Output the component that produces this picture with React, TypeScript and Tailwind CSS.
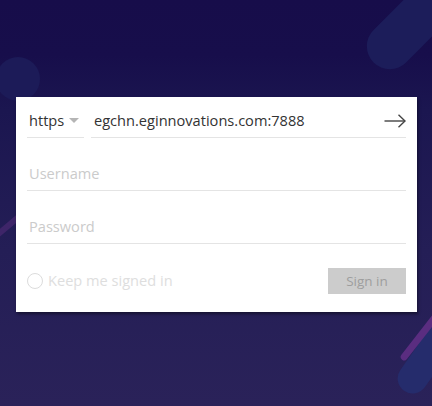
export default function App() {
  const font = { fontFamily: '"Open Sans", "Liberation Sans", sans-serif' }
  return (
    <div className="relative w-[432px] h-[406px] overflow-hidden bg-[linear-gradient(180deg,#170d4a_0px,#170e4b_55px,#1b1650_110px,#241e56_250px,#2a2259_406px)]" style={font}>
      {/* background decorations */}
      <div className="absolute left-[-4px] top-[57px] w-[44px] h-[44px] rounded-full bg-[#1c1b58]" />
      <div className="absolute left-[393px] top-[-40px] w-[46px] h-[120px] rounded-full bg-[#1c1d5a] rotate-45" />
      <div className="absolute left-[6px] top-[200px] w-[6px] h-[50px] rounded-full bg-[#3e2569] rotate-[50deg]" />
      <div className="absolute left-[412px] top-[318px] w-[30px] h-[80px] rounded-full bg-[#252c6c] rotate-[35deg]" />
      <div className="absolute left-[417px] top-[306px] w-[7px] h-[60px] rounded-full bg-[#5a2d80] rotate-[38deg]" />

      {/* card */}
      <div className="absolute left-[16px] top-[97px] w-[401px] bg-white px-[11px] pt-[7px] pb-[18px] shadow-[1px_2px_3px_rgba(0,0,0,0.45)]">
        <div className="flex h-[34px] gap-[7px]">
          <div className="flex w-[57px] items-center border-b border-[#e4e4e4] pl-[2px]">
            <span className="text-[14.6px] text-[#333]">https</span>
            <svg width="10" height="6" viewBox="0 0 10 6" className="ml-[5px]">
              <path d="M0 0 L10 0 L5 5 Z" fill="#b5b5b5" />
            </svg>
          </div>
          <div className="flex flex-1 items-center justify-between border-b border-[#e4e4e4] pl-[3px]">
            <span className="text-[14.6px] text-[#333]">egchn.eginnovations.com:7888</span>
            <svg width="22" height="14" viewBox="0 0 22 14" fill="none" stroke="#444" strokeWidth="1.4">
              <path d="M0.5 7 H21" />
              <path d="M14.5 0.8 L21 7 L14.5 13.2" />
            </svg>
          </div>
        </div>
        <div className="flex h-[53px] items-end border-b border-[#e4e4e4] pb-[7px] pl-[2px]">
          <span className="text-[14.6px] leading-[20px] text-[#cbcbcb]">Username</span>
        </div>
        <div className="flex h-[53px] items-end border-b border-[#e4e4e4] pb-[7px] pl-[2px]">
          <span className="text-[14.6px] leading-[20px] text-[#cbcbcb]">Password</span>
        </div>
        <div className="mt-[24px] flex h-[26px] items-center justify-between">
          <div className="flex items-center gap-[5px]">
            <div className="h-[16px] w-[16px] rounded-full border-[1.5px] border-[#dcdcdc]" />
            <span className="text-[14.6px] text-[#dedede]">Keep me signed in</span>
          </div>
          <div className="flex h-[26px] w-[78px] items-center justify-center bg-[#cccccc] text-[13.5px] text-[#9e9e9e]">
            Sign in
          </div>
        </div>
      </div>
    </div>
  )
}
